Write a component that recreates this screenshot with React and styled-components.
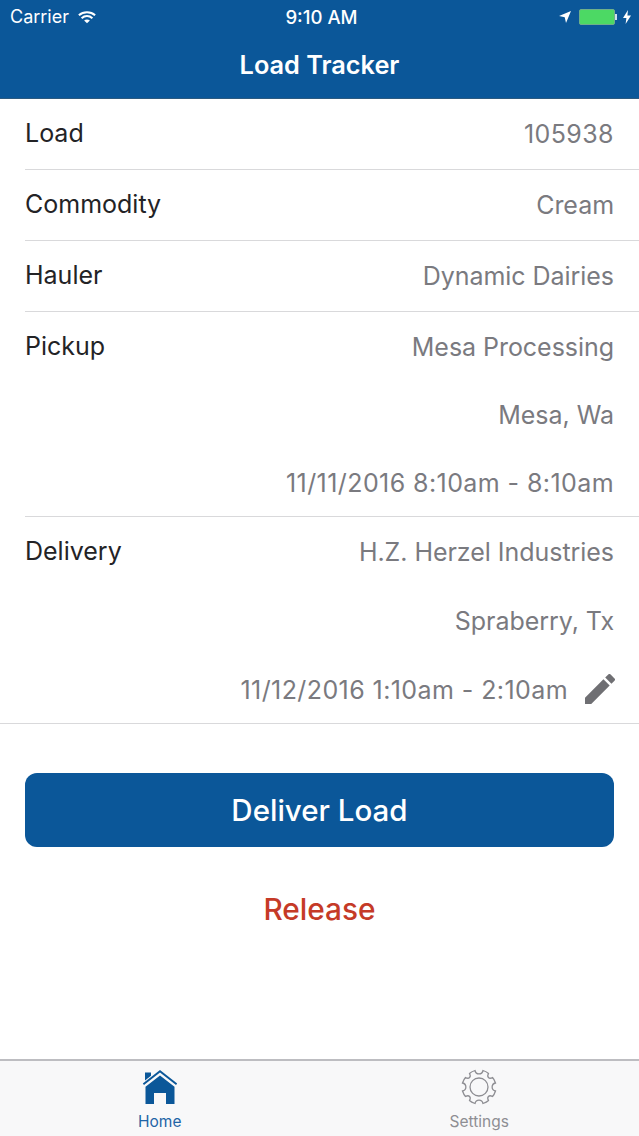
import React from "react";
import styled, { createGlobalStyle } from "styled-components";

const GlobalStyle = createGlobalStyle`
	html, body {
		margin: 0;
		padding: 0;
		background: #ffffff;
	}
	* {
		box-sizing: border-box;
	}
`;

const rows = [
	{ label: "Load", lines: ["105938"] },
	{ label: "Commodity", lines: ["Cream"] },
	{ label: "Hauler", lines: ["Dynamic Dairies"] },
	{ label: "Pickup", lines: ["Mesa Processing", "Mesa, Wa", "11/11/2016 8:10am - 8:10am"] },
	{ label: "Delivery", lines: ["H.Z. Herzel Industries", "Spraberry, Tx", "11/12/2016 1:10am - 2:10am"], edit: true, last: true },
];

function App() {
	return (
		<Page>
			<GlobalStyle />
			<Header>
				<StatusBar>
					<StatusSide>
						<Carrier>Carrier</Carrier>
						<svg width="18" height="14" viewBox="0 0 20 15" fill="none" stroke="#fff" strokeWidth="2.3">
							<path d="M1 5.5C6 1 14 1 19 5.5" />
							<path d="M4 8.8C7.5 5.8 12.5 5.8 16 8.8" />
							<path d="M10 14.5L6.8 11.4C8.6 10 11.4 10 13.2 11.4Z" fill="#fff" stroke="none" />
						</svg>
					</StatusSide>
					<Clock>9:10 AM</Clock>
					<StatusSide $right>
						<svg width="12" height="12" viewBox="0 0 13 13">
							<path d="M13 0L7.6 13L6.2 6.8L0 5.4Z" fill="#fff" />
						</svg>
						<Battery>
							<BatteryFill />
						</Battery>
						<svg width="8" height="14" viewBox="0 0 8 14">
							<path d="M5 0L0 8H3.4L2.6 14L8 5.6H4.4Z" fill="#fff" />
						</svg>
					</StatusSide>
				</StatusBar>
				<NavTitle>Load Tracker</NavTitle>
			</Header>

			<List>
				{rows.map((row) => (
					<Row key={row.label} $last={row.last}>
						<Label>{row.label}</Label>
						<Values>
							{row.lines.map((line, i) => (
								<Value key={line} $tall={row.last} $numeric={/\d/.test(line)}>
									<span>{line}</span>
									{row.edit && i === row.lines.length - 1 && (
										<EditIcon width="30" height="30" viewBox="3 3 18 18">
											<path
												d="M3 17.25V21h3.75L17.81 9.94l-3.75-3.75L3 17.25zM20.71 7.04a1 1 0 0 0 0-1.41l-2.34-2.34a1 1 0 0 0-1.41 0l-1.83 1.83 3.75 3.75 1.83-1.83z"
												fill="#6f6f73"
											/>
										</EditIcon>
									)}
								</Value>
							))}
						</Values>
					</Row>
				))}
			</List>

			<Actions>
				<DeliverButton>Deliver Load</DeliverButton>
				<ReleaseButton>Release</ReleaseButton>
			</Actions>

			<TabBar>
				<Tab $active>
					<svg width="36" height="36" viewBox="0 0 36 36">
						<path d="M18 1L0.8 14.5L2 16L18 3.6L34 16L35.2 14.5Z" fill="#0b5799" />
						<path d="M3 3.5H9V6.8L3 11.5Z" fill="#0b5799" />
						<path d="M18 6.5L32.5 17.8V35H24V24H12V35H3.5V17.8Z" fill="#0b5799" />
					</svg>
					<TabLabel $active>Home</TabLabel>
				</Tab>
				<Tab>
					<svg width="36" height="36" viewBox="0 0 36 36" fill="none" stroke="#8e8e93" strokeWidth="1.3">
						<circle cx="18" cy="18" r="9" />
						<path d="M14 1.5C15 6 21 6 22 1.5C23.5 2 26 3 27.5 4.5C25.5 8 28 10.5 31.5 8.5C33 10 34 12.5 34.5 14C30 15 30 21 34.5 22C34 23.5 33 26 31.5 27.5C28 25.5 25.5 28 27.5 31.5C26 33 23.5 34 22 34.5C21 30 15 30 14 34.5C12.5 34 10 33 8.5 31.5C10.5 28 8 25.5 4.5 27.5C3 26 2 23.5 1.5 22C6 21 6 15 1.5 14C2 12.5 3 10 4.5 8.5C8 10.5 10.5 8 8.5 4.5C10 3 12.5 2 14 1.5Z" />
					</svg>
					<TabLabel>Settings</TabLabel>
				</Tab>
			</TabBar>
		</Page>
	);
}

const Page = styled.div`
	width: 639px;
	height: 1136px;
	display: flex;
	flex-direction: column;
	font-family: Inter, "Liberation Sans", sans-serif;
	overflow: hidden;
`;

const Header = styled.header`
	height: 99px;
	flex: none;
	background: #0b5799;
	border-bottom: 1px solid #2c5a80;
	color: #ffffff;
`;

const StatusBar = styled.div`
	height: 33px;
	padding: 0 8px 0 10px;
	display: grid;
	grid-template-columns: 1fr auto 1fr;
	align-items: center;
`;

const StatusSide = styled.div`
	display: flex;
	align-items: center;
	justify-content: ${(p) => (p.$right ? "flex-end" : "flex-start")};
	gap: ${(p) => (p.$right ? "8px" : "9px")};
`;

const Carrier = styled.span`
	font-size: 18px;
	font-weight: 400;
`;

const Clock = styled.span`
	margin-left: 2px;
	font-size: 18.6px;
	font-weight: 500;
`;

const Battery = styled.div`
	width: 36px;
	height: 16px;
	border-radius: 2px;
	background: #4cd964;
	border: 1px solid #6fb08a;
	position: relative;

	&::after {
		content: "";
		position: absolute;
		right: -3px;
		top: 4px;
		width: 2px;
		height: 6px;
		background: #cfe0ee;
	}
`;

const BatteryFill = styled.div`
	width: 100%;
	height: 100%;
`;

const NavTitle = styled.h1`
	margin: 0;
	height: 62px;
	padding-top: 2px;
	display: flex;
	align-items: center;
	justify-content: center;
	font-size: 25.3px;
	font-weight: 600;
	line-height: 1;
`;

const List = styled.div`
	display: flex;
	flex-direction: column;
`;

const Row = styled.div`
	display: flex;
	justify-content: space-between;
	align-items: flex-start;
	padding: ${(p) => (p.$last ? "0 25px 0 25px" : "0 25px 0 0")};
	margin-left: ${(p) => (p.$last ? "0" : "25px")};
	border-bottom: 1px solid #d9d9db;
`;

const Label = styled.div`
	height: 70px;
	display: flex;
	align-items: center;
	font-size: 25px;
	color: #232326;
	transform: translateY(-1px);
`;

const Values = styled.div`
	display: flex;
	flex-direction: column;
	align-items: flex-end;
`;

const Value = styled.div`
	height: ${(p) => (p.$tall ? "68.7px" : "68px")};
	display: flex;
	align-items: center;
	font-size: 25px;
	letter-spacing: ${(p) => (p.$numeric ? "0.42px" : "-0.04px")};
	color: #7a7a7f;

	&:only-child {
		height: 68px;
	}

	span {
		transform: translateY(1px);
	}
`;

const EditIcon = styled.svg`
	margin-left: 17px;
	margin-right: -1px;
	flex: none;
`;

const Actions = styled.div`
	flex: 1;
	display: flex;
	flex-direction: column;
	align-items: center;
	padding: 49px 25px 0;
`;

const DeliverButton = styled.button`
	width: 100%;
	height: 74px;
	flex: none;
	border: none;
	border-radius: 12px;
	background: #0b5799;
	color: #ffffff;
	font-family: inherit;
	font-size: 29.5px;
	font-weight: 500;
`;

const ReleaseButton = styled.button`
	margin-top: 36px;
	height: 52px;
	border: none;
	background: transparent;
	color: #c53a27;
	font-family: inherit;
	font-size: 29.8px;
	font-weight: 500;
`;

const TabBar = styled.nav`
	height: 77px;
	flex: none;
	display: grid;
	grid-template-columns: 1fr 1fr;
	background: #f8f8f9;
	border-top: 2px solid #bdbdc1;
`;

const Tab = styled.div`
	display: flex;
	flex-direction: column;
	align-items: center;
	padding-top: 8px;
`;

const TabLabel = styled.span`
	margin-top: 8px;
	font-size: 15.5px;
	line-height: 18px;
	color: ${(p) => (p.$active ? "#1f64a6" : "#8e8e93")};
`;

export default App;
